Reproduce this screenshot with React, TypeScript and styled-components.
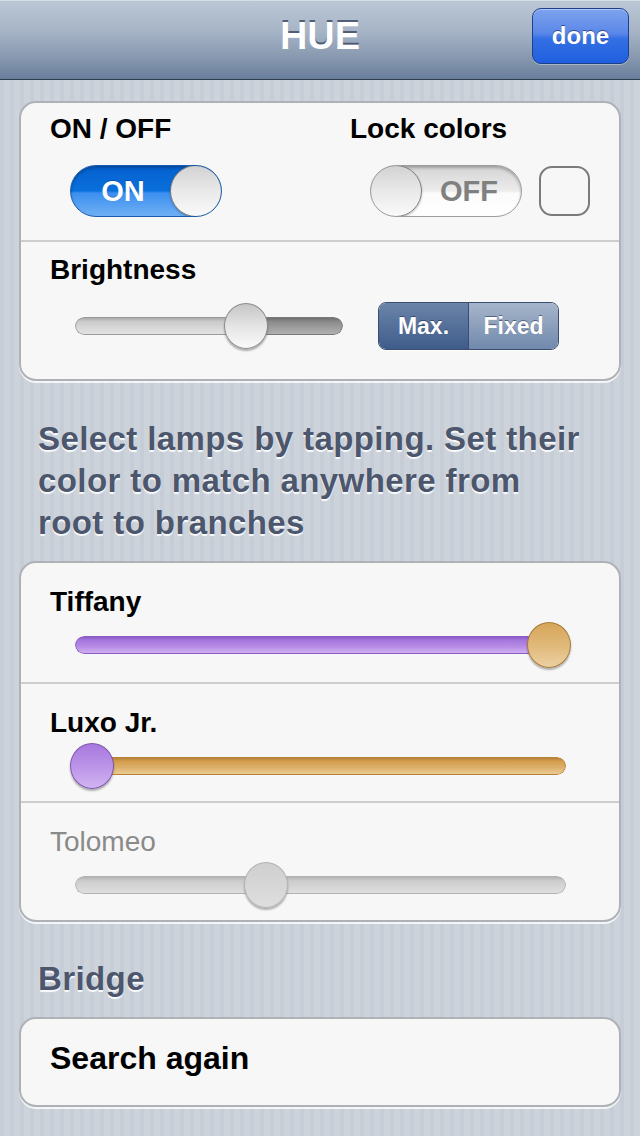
import React from "react";
import styled, {createGlobalStyle} from "styled-components";

const GlobalStyle = createGlobalStyle`
  html, body {
    margin: 0;
    padding: 0;
  }
  body {
    font-family: "Liberation Sans", Arial, Helvetica, sans-serif;
    background: repeating-linear-gradient(90deg, #c6cdd6 0px, #c6cdd6 4px, #ccd3db 4px, #ccd3db 10px);
    min-height: 1136px;
  }
`;

interface SliderProps {
  width: number;
  value: number;
  minColor: "gray" | "purple" | "tan" | "light";
  maxColor: "gray" | "purple" | "tan" | "light" | "dark";
  thumb: "gray" | "purple" | "tan" | "disabled";
}

const fills: Record<string, string> = {
  light: "linear-gradient(#a9a9a9 0%, #c9c9c9 20%, #d8d8d8 60%, #e2e2e2 100%)",
  dark: "linear-gradient(#707070 0%, #8c8c8c 25%, #a2a2a2 70%, #b0b0b0 100%)",
  gray: "linear-gradient(#b4b4b4 0%, #cdcdcd 25%, #d8d8d8 70%, #dedede 100%)",
  purple: "linear-gradient(#8d5bc9 0%, #a676dd 20%, #b78ce5 60%, #cfb0f0 100%)",
  tan: "linear-gradient(#b8823a 0%, #d49d4c 20%, #ddb06b 60%, #ebcb94 100%)",
};

const trackBorders: Record<string, string> = {
  light: "#9a9a9a",
  dark: "#7a7a7a",
  gray: "#b2b2b2",
  purple: "#8a5cc4",
  tan: "#b78238",
};

const thumbs: Record<string, {bg: string; border: string}> = {
  gray: {bg: "linear-gradient(#c6c6c6 0%, #e4e4e4 50%, #fafafa 100%)", border: "#8d8d8d"},
  disabled: {bg: "linear-gradient(#cfcfcf 0%, #d8d8d8 60%, #dedede 100%)", border: "#b3b3b3"},
  purple: {bg: "linear-gradient(#a878df 0%, #bb93e8 50%, #d2b5f2 100%)", border: "#7d55ad"},
  tan: {bg: "linear-gradient(#d6a55a 0%, #e0b878 50%, #ecd0a2 100%)", border: "#a67a38"},
};

const Slider: React.FC<SliderProps> = ({width, value, minColor, maxColor, thumb}) => {
  const thumbW = 44;
  const left = -5 + value * (width + 10 - thumbW);
  const split = left + thumbW / 2;
  return (
    <SliderBox $w={width}>
      <Track>
        <TrackPart $fill={minColor} style={{width: Math.max(split, 0)}} $first />
        <TrackPart $fill={maxColor} style={{flex: 1}} />
      </Track>
      <Thumb $kind={thumb} style={{left}} />
    </SliderBox>
  );
};

const Toggle: React.FC<{on: boolean}> = ({on}) => (
  <SwitchTrack $on={on}>
    <SwitchText $on={on}>{on ? "ON" : "OFF"}</SwitchText>
    <Knob />
  </SwitchTrack>
);

export default function App() {
  return (
    <>
      <GlobalStyle />
      <Page>
        <NavBar>
          <NavTitle>HUE</NavTitle>
          <DoneButton>done</DoneButton>
        </NavBar>

        <Content>
          <Card>
            <SwitchRow>
              <Column>
                <Label>ON / OFF</Label>
                <Controls>
                  <Toggle on />
                </Controls>
              </Column>
              <Column>
                <Label>Lock colors</Label>
                <Controls>
                  <Toggle on={false} />
                  <CheckBox />
                </Controls>
              </Column>
            </SwitchRow>
            <BrightnessRow>
              <Label>Brightness</Label>
              <BrightnessControls>
                <Slider width={268} value={0.66} minColor="light" maxColor="dark" thumb="gray" />
                <Segmented>
                  <Segment $selected>Max.</Segment>
                  <Segment>Fixed</Segment>
                </Segmented>
              </BrightnessControls>
            </BrightnessRow>
          </Card>

          <SectionText>
            Select lamps by tapping. Set their color to match anywhere from root to branches
          </SectionText>

          <Card>
            <LampRow>
              <Label>Tiffany</Label>
              <SliderIndent>
                <Slider width={491} value={1} minColor="purple" maxColor="purple" thumb="tan" />
              </SliderIndent>
            </LampRow>
            <LampRow>
              <Label>Luxo Jr.</Label>
              <SliderIndent>
                <Slider width={491} value={0} minColor="tan" maxColor="tan" thumb="purple" />
              </SliderIndent>
            </LampRow>
            <LampRow>
              <Label $muted>Tolomeo</Label>
              <SliderIndent>
                <Slider width={491} value={0.38} minColor="gray" maxColor="gray" thumb="disabled" />
              </SliderIndent>
            </LampRow>
          </Card>

          <SectionHeader>Bridge</SectionHeader>

          <Card>
            <ActionRow>Search again</ActionRow>
          </Card>
        </Content>
      </Page>
    </>
  );
}

const Page = styled.div`
  width: 640px;
  min-height: 1136px;
  display: flex;
  flex-direction: column;
`;

const NavBar = styled.div`
  height: 79px;
  border-bottom: 1px solid #2e3b4e;
  background: linear-gradient(#bcc8d6 0%, #a6b4c6 40%, #8596ae 75%, #6a7f9c 100%);
  box-shadow: inset 0 1px 0 #d4dde8;
  display: grid;
  grid-template-columns: 1fr auto 1fr;
  align-items: center;
  padding: 0 11px;
`;

const NavTitle = styled.div`
  grid-column: 2;
  color: #fff;
  font-size: 38px;
  font-weight: bold;
  text-shadow: 0 -2px 0 rgba(40, 55, 80, 0.7);
  margin-top: -6px;
`;

const DoneButton = styled.div`
  grid-column: 3;
  justify-self: end;
  width: 97px;
  height: 56px;
  box-sizing: border-box;
  margin-top: -8px;
  border-radius: 9px;
  border: 1px solid #1d3f8e;
  background: linear-gradient(#7ea3ee 0%, #5a87e8 45%, #3470e4 55%, #1f5fdf 100%);
  box-shadow: 0 1px 0 rgba(255, 255, 255, 0.35), inset 0 1px 0 rgba(255, 255, 255, 0.4);
  color: #fff;
  font-size: 24px;
  font-weight: bold;
  text-shadow: 0 -1px 0 rgba(0, 0, 60, 0.5);
  display: flex;
  align-items: center;
  justify-content: center;
`;

const Content = styled.div`
  padding: 21px 19px 0;
  display: flex;
  flex-direction: column;
`;

const Card = styled.div`
  background: #f7f7f7;
  border: 2px solid #aeb1b6;
  border-radius: 17px;
  box-shadow: 0 2px 0 rgba(255, 255, 255, 0.8);
  overflow: hidden;
  display: flex;
  flex-direction: column;
`;

const RowBase = styled.div`
  & + & {
    border-top: 2px solid #cdcdcd;
  }
`;

const SwitchRow = styled(RowBase)`
  display: grid;
  grid-template-columns: 300px 1fr;
  padding: 10px 28px 23px 29px;
  height: 137px;
  box-sizing: border-box;
`;

const Column = styled.div`
  display: flex;
  flex-direction: column;
`;

const Label = styled.div<{$muted?: boolean}>`
  font-size: 28px;
  line-height: 32px;
  font-weight: ${(p) => (p.$muted ? "normal" : "bold")};
  color: ${(p) => (p.$muted ? "#8a8a8a" : "#000")};
`;

const Controls = styled.div`
  display: flex;
  align-items: center;
  gap: 17px;
  margin-top: 20px;
  padding-left: 20px;
`;

const SwitchTrack = styled.div<{$on: boolean}>`
  width: 152px;
  height: 52px;
  box-sizing: border-box;
  border-radius: 26px;
  border: 1px solid ${(p) => (p.$on ? "#1b5dac" : "#9c9c9c")};
  background: ${(p) =>
    p.$on
      ? "linear-gradient(#0561cf 0%, #0a70dc 50%, #3c8ff0 54%, #6fb0f4 100%)"
      : "linear-gradient(#d4d4d4 0%, #ececec 50%, #fbfbfb 54%, #ffffff 100%)"};
  box-shadow: inset 0 2px 3px rgba(0, 0, 0, 0.25);
  display: flex;
  flex-direction: ${(p) => (p.$on ? "row" : "row-reverse")};
  align-items: center;
  overflow: hidden;
`;

const SwitchText = styled.div<{$on: boolean}>`
  flex: 1;
  text-align: center;
  font-size: 29px;
  font-weight: bold;
  color: ${(p) => (p.$on ? "#fff" : "#808080")};
  text-shadow: ${(p) => (p.$on ? "0 -1px 0 rgba(0, 40, 120, 0.4)" : "none")};
  margin: ${(p) => (p.$on ? "0 0 0 4px" : "0 4px 0 0")};
`;

const Knob = styled.div`
  width: 52px;
  height: 52px;
  margin: -1px;
  box-sizing: border-box;
  border-radius: 50%;
  border: 1px solid #7e7e7e;
  background: linear-gradient(#d2d2d2 0%, #e9e9e9 50%, #fafafa 100%);
  box-shadow: 0 1px 2px rgba(0, 0, 0, 0.3);
  flex-shrink: 0;
`;

const CheckBox = styled.div`
  width: 51px;
  height: 50px;
  box-sizing: border-box;
  border: 2px solid #7b7b7b;
  border-radius: 13px;
`;

const BrightnessRow = styled(RowBase)`
  display: flex;
  flex-direction: column;
  padding: 12px 28px 0 29px;
  height: 139px;
  box-sizing: border-box;
`;

const BrightnessControls = styled.div`
  display: flex;
  align-items: center;
  margin-top: 16px;
  padding-left: 25px;
  gap: 35px;
`;

const SliderBox = styled.div<{$w: number}>`
  position: relative;
  width: ${(p) => p.$w}px;
  height: 46px;
  display: flex;
  align-items: center;
`;

const Track = styled.div`
  flex: 1;
  height: 18px;
  display: flex;
  border-radius: 9px;
  overflow: hidden;
`;

const TrackPart = styled.div<{$fill: string; $first?: boolean}>`
  height: 100%;
  box-sizing: border-box;
  background: ${(p) => fills[p.$fill]};
  border: 1px solid ${(p) => trackBorders[p.$fill]};
  border-left-width: ${(p) => (p.$first ? "1px" : "0")};
  border-right-width: ${(p) => (p.$first ? "0" : "1px")};
  border-radius: ${(p) => (p.$first ? "9px 0 0 9px" : "0 9px 9px 0")};
`;

const Thumb = styled.div<{$kind: string}>`
  position: absolute;
  top: 0;
  width: 44px;
  height: 46px;
  box-sizing: border-box;
  border-radius: 50%;
  background: ${(p) => thumbs[p.$kind].bg};
  border: 1px solid ${(p) => thumbs[p.$kind].border};
  box-shadow: 0 2px 2px rgba(0, 0, 0, 0.3);
`;

const Segmented = styled.div`
  display: flex;
  width: 181px;
  height: 48px;
  box-sizing: border-box;
  border-radius: 8px;
  border: 1px solid #3a4f70;
  overflow: hidden;
  box-shadow: 0 1px 0 rgba(255, 255, 255, 0.8);
`;

const Segment = styled.div<{$selected?: boolean}>`
  flex: 1;
  display: flex;
  align-items: center;
  justify-content: center;
  color: #fff;
  font-size: 23px;
  font-weight: bold;
  text-shadow: 0 -1px 0 rgba(20, 30, 60, 0.5);
  background: ${(p) =>
    p.$selected
      ? "linear-gradient(#6a84a8 0%, #55709a 50%, #3f5c8a 100%)"
      : "linear-gradient(#a6b5ca 0%, #8c9fbb 50%, #7089ad 100%)"};
  & + & {
    border-left: 1px solid #3a4f70;
  }
`;

const SectionText = styled.div`
  margin: 37px 0 0 19px;
  width: 552px;
  font-size: 33px;
  line-height: 42px;
  letter-spacing: 0.4px;
  font-weight: bold;
  color: #4c566c;
  text-shadow: 0 2px 1px rgba(255, 255, 255, 0.9);
  padding-bottom: 17px;
`;

const LampRow = styled(RowBase)`
  height: 119px;
  box-sizing: border-box;
  padding: 23px 28px 0 29px;
  display: flex;
  flex-direction: column;
`;

const SliderIndent = styled.div`
  margin-top: 4px;
  padding-left: 25px;
`;

const SectionHeader = styled.div`
  margin: 36px 19px 0;
  font-size: 33px;
  line-height: 42px;
  letter-spacing: 0.4px;
  font-weight: bold;
  color: #4c566c;
  text-shadow: 0 2px 1px rgba(255, 255, 255, 0.9);
  padding-bottom: 17px;
`;

const ActionRow = styled.div`
  height: 86px;
  box-sizing: border-box;
  padding: 0 29px 7px;
  display: flex;
  align-items: center;
  font-size: 32px;
  font-weight: bold;
  color: #000;
`;
